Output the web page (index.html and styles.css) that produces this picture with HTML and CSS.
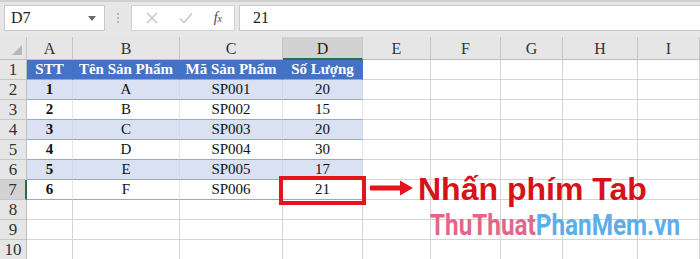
FILE: index.html
```html
<!DOCTYPE html>
<html>
<head>
<meta charset="utf-8">
<link rel="stylesheet" href="styles.css">
</head>
<body>
<div class="app">
  <div class="toolbar">
    <div class="namebox"><span>D7</span><svg class="dd" width="8" height="5" viewBox="0 0 8 5"><path d="M0 0h8L4 5z" fill="#6b6b6b"/></svg></div>
    <div class="dots"><i></i><i></i><i></i></div>
    <div class="fbtns">
      <svg width="12" height="12" viewBox="0 0 12 12"><path d="M1 1L11 11M11 1L1 11" stroke="#c4c4c4" stroke-width="1.3" fill="none"/></svg>
      <svg width="14" height="12" viewBox="0 0 14 12"><path d="M1 6.5L5 10.5L13 1.5" stroke="#c4c4c4" stroke-width="1.3" fill="none"/></svg>
      <span class="fx"><i>f</i><i class="x">x</i></span>
    </div>
    <div class="finput">21</div>
  </div>
  <div class="sheet">
    <div class="corner"><svg width="10" height="10" viewBox="0 0 10 10"><path d="M10 0V10H0z" fill="#b7b7b7"/></svg></div>
    <div class="ch">A</div><div class="ch">B</div><div class="ch">C</div><div class="ch sel">D</div><div class="ch">E</div><div class="ch">F</div><div class="ch">G</div><div class="ch">H</div><div class="ch">I</div>

    <div class="rh">1</div>
    <div class="c th">STT</div><div class="c th">Tên Sản Phẩm</div><div class="c th">Mã Sản Phẩm</div><div class="c th">Số Lượng</div><div class="c"></div><div class="c"></div><div class="c"></div><div class="c"></div><div class="c"></div>

    <div class="rh">2</div>
    <div class="c band b">1</div><div class="c band">A</div><div class="c band">SP001</div><div class="c band">20</div><div class="c"></div><div class="c"></div><div class="c"></div><div class="c"></div><div class="c"></div>

    <div class="rh">3</div>
    <div class="c plain b">2</div><div class="c plain">B</div><div class="c plain">SP002</div><div class="c plain">15</div><div class="c"></div><div class="c"></div><div class="c"></div><div class="c"></div><div class="c"></div>

    <div class="rh">4</div>
    <div class="c band b">3</div><div class="c band">C</div><div class="c band">SP003</div><div class="c band">20</div><div class="c"></div><div class="c"></div><div class="c"></div><div class="c"></div><div class="c"></div>

    <div class="rh">5</div>
    <div class="c plain b">4</div><div class="c plain">D</div><div class="c plain">SP004</div><div class="c plain">30</div><div class="c"></div><div class="c"></div><div class="c"></div><div class="c"></div><div class="c"></div>

    <div class="rh">6</div>
    <div class="c band b">5</div><div class="c band">E</div><div class="c band">SP005</div><div class="c band">17</div><div class="c"></div><div class="c"></div><div class="c"></div><div class="c"></div><div class="c"></div>

    <div class="rh sel">7</div>
    <div class="c plain b">6</div><div class="c plain">F</div><div class="c plain">SP006</div><div class="c plain">21</div><div class="c"></div><div class="c"></div><div class="c"></div><div class="c"></div><div class="c"></div>

    <div class="rh">8</div>
    <div class="c"></div><div class="c"></div><div class="c"></div><div class="c"></div><div class="c"></div><div class="c"></div><div class="c"></div><div class="c"></div><div class="c"></div>

    <div class="rh">9</div>
    <div class="c"></div><div class="c"></div><div class="c"></div><div class="c"></div><div class="c"></div><div class="c"></div><div class="c"></div><div class="c"></div><div class="c"></div>

    <div class="rh">10</div>
    <div class="c"></div><div class="c"></div><div class="c"></div><div class="c"></div><div class="c"></div><div class="c"></div><div class="c"></div><div class="c"></div><div class="c"></div>
  </div>

  <div class="redbox"></div>
  <svg class="arrow" width="44" height="16" viewBox="0 0 44 16"><path d="M0 5.5H30V0.5L43 8L30 15.5V10.5H0z" fill="#e3141c"/></svg>
  <div class="note">Nhấn phím Tab</div>
  <div class="mark"><span class="pink">ThuThuat</span><span class="blue">PhanMem.vn</span></div>
</div>
</body>
</html>
```

FILE: styles.css
```css
* { box-sizing: border-box; }
html, body { margin: 0; padding: 0; }
body { width: 700px; height: 259px; overflow: hidden; background: #fff; }
.app { position: relative; width: 700px; height: 259px; overflow: hidden; font-family: "Liberation Serif", "Times New Roman", "DejaVu Serif", serif; }

.toolbar {
  height: 37px;
  background: #e7e7e7;
  border-top: 2px solid #d0d0d0;
  display: flex;
  align-items: flex-start;
  padding: 3px 0 0 4px;
}
.namebox {
  width: 101px; height: 26px;
  background: #fff;
  border: 1px solid #c9c9c9;
  display: flex; align-items: center; justify-content: space-between;
  padding: 0 8px 0 6px;
  font-size: 16px; color: #222;
}
.dots { width: 26px; height: 26px; display: flex; flex-direction: column; align-items: center; justify-content: center; gap: 2px; }
.dots i { width: 2px; height: 2px; background: #b5b5b5; display: block; }
.fbtns {
  width: 104px; height: 26px;
  background: #fff;
  border: 1px solid #d2d2d2;
  display: flex; align-items: center; justify-content: space-between;
  padding: 0 12px 0 14px;
}
.fx { font-style: italic; font-size: 14px; color: #444; }
.fx .x { font-size: 10px; }
.finput {
  flex: 1; height: 26px; margin-left: 4px;
  background: #fff;
  border: 1px solid #c9c9c9;
  border-right: none;
  padding: 3px 0 0 13px;
  font-size: 16px; color: #222;
}

.sheet {
  display: grid;
  grid-template-columns: 27px 46px 107px 103px 80px 68px 70px 62px 75px 62px;
  grid-template-rows: 23px repeat(10, 20px);
  background: #fff;
}
.corner { background: #e6e6e6; border-right: 1px solid #c6c6c6; border-bottom: 1px solid #bdbdbd; display: flex; align-items: flex-end; justify-content: flex-end; padding: 0 4px 4px 0; }
.ch {
  background: #e6e6e6;
  border-right: 1px solid #c6c6c6;
  border-bottom: 1px solid #bdbdbd;
  font-size: 16px; color: #333;
  display: flex; align-items: center; justify-content: center;
  padding-top: 2px;
}
.ch.sel { background: #d2d2d2; border-bottom: 2px solid #217346; color: #222; }
.rh {
  background: #e6e6e6;
  border-right: 1px solid #bdbdbd;
  border-bottom: 1px solid #c6c6c6;
  font-size: 17px; color: #333;
  display: flex; align-items: center; justify-content: center;
}
.rh.sel { background: #d2d2d2; border-right: 2px solid #217346; }
.c {
  border-right: 1px solid #d4d4d4;
  border-bottom: 1px solid #d4d4d4;
  font-size: 15px; color: #111;
  display: flex; align-items: center; justify-content: center;
}
.th { background: #4472c4; color: #fff; font-weight: bold; border-right-color: #4472c4; border-bottom-color: #8eaadb; }
.band { background: #d9e1f2; border-right-color: #d0d8ea; border-bottom-color: #8eaadb; }
.plain { border-right-color: #e6e6e6; border-bottom-color: #8eaadb; }
.b { font-weight: bold; }

.redbox {
  position: absolute;
  left: 279px; top: 176px;
  width: 87px; height: 29px;
  border: 4px solid #e3141c;
}
.arrow { position: absolute; left: 370px; top: 180px; }
.note {
  position: absolute;
  left: 418px; top: 171px;
  font-family: "Liberation Sans", Arial, sans-serif;
  font-weight: bold;
  font-size: 32px;
  line-height: 36px;
  color: #d8121b;
}
.mark {
  position: absolute;
  left: 430px; top: 207px;
  font-family: "Roboto", "Liberation Sans", sans-serif;
  font-weight: bold;
  font-size: 30px;
  line-height: 36px;
  transform: scaleX(0.81);
  transform-origin: left top;
}
.pink { color: #e2668a; }
.blue { color: #5caeea; }
```
